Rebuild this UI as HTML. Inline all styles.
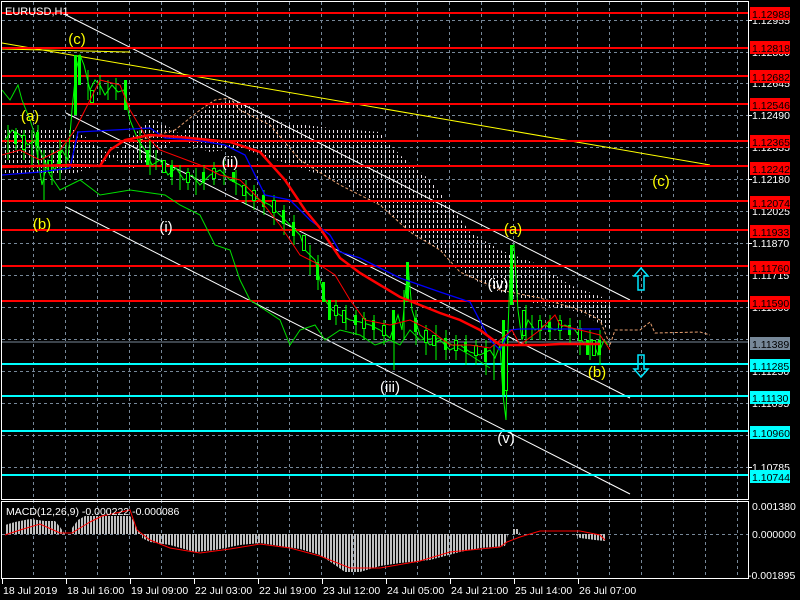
<!DOCTYPE html>
<html><head><meta charset="utf-8"><style>
html,body{margin:0;padding:0;background:#000;width:800px;height:600px;overflow:hidden}
svg{display:block}
text{font-family:"Liberation Sans",sans-serif}
</style></head><body>
<svg width="800" height="600" viewBox="0 0 800 600" xmlns="http://www.w3.org/2000/svg">
<defs>
<pattern id="cl" width="4" height="5" patternUnits="userSpaceOnUse">
<line x1="1.5" y1="0" x2="1.5" y2="3" stroke="#e8e0e8" stroke-width="1"/>
</pattern>
<pattern id="hs" width="3" height="10" patternUnits="userSpaceOnUse">
<rect x="0" y="0" width="2" height="10" fill="#c0c0c0"/>
</pattern>
</defs>
<!-- grid -->
<g stroke="#778899" stroke-width="1" stroke-dasharray="3,3">
<line x1="33.5" y1="2" x2="33.5" y2="578"/><line x1="65.5" y1="2" x2="65.5" y2="578"/><line x1="97.5" y1="2" x2="97.5" y2="578"/><line x1="129.5" y1="2" x2="129.5" y2="578"/><line x1="161.5" y1="2" x2="161.5" y2="578"/><line x1="193.5" y1="2" x2="193.5" y2="578"/><line x1="225.5" y1="2" x2="225.5" y2="578"/><line x1="257.5" y1="2" x2="257.5" y2="578"/><line x1="289.5" y1="2" x2="289.5" y2="578"/><line x1="321.5" y1="2" x2="321.5" y2="578"/><line x1="353.5" y1="2" x2="353.5" y2="578"/><line x1="385.5" y1="2" x2="385.5" y2="578"/><line x1="417.5" y1="2" x2="417.5" y2="578"/><line x1="449.5" y1="2" x2="449.5" y2="578"/><line x1="481.5" y1="2" x2="481.5" y2="578"/><line x1="513.5" y1="2" x2="513.5" y2="578"/><line x1="545.5" y1="2" x2="545.5" y2="578"/><line x1="577.5" y1="2" x2="577.5" y2="578"/><line x1="609.5" y1="2" x2="609.5" y2="578"/><line x1="641.5" y1="2" x2="641.5" y2="578"/><line x1="673.5" y1="2" x2="673.5" y2="578"/><line x1="705.5" y1="2" x2="705.5" y2="578"/><line x1="737.5" y1="2" x2="737.5" y2="578"/>
<line x1="2" y1="20.5" x2="748" y2="20.5"/><line x1="2" y1="52.5" x2="748" y2="52.5"/><line x1="2" y1="83.5" x2="748" y2="83.5"/><line x1="2" y1="115.5" x2="748" y2="115.5"/><line x1="2" y1="147.5" x2="748" y2="147.5"/><line x1="2" y1="179.5" x2="748" y2="179.5"/><line x1="2" y1="211.5" x2="748" y2="211.5"/><line x1="2" y1="243.5" x2="748" y2="243.5"/><line x1="2" y1="275.5" x2="748" y2="275.5"/><line x1="2" y1="307.5" x2="748" y2="307.5"/><line x1="2" y1="339.5" x2="748" y2="339.5"/><line x1="2" y1="371.5" x2="748" y2="371.5"/><line x1="2" y1="403.5" x2="748" y2="403.5"/><line x1="2" y1="435.5" x2="748" y2="435.5"/><line x1="2" y1="467.5" x2="748" y2="467.5"/>
<line x1="2" y1="534.5" x2="748" y2="534.5"/>
</g>
<!-- cloud -->
<polygon fill="url(#cl)" points="0,130 40,128 75,130 90,140 110,155 130,170 150,160 175,140 205,108 230,100 255,108 280,122 330,128 380,132 400,155 430,180 450,205 470,232 500,250 540,265 570,285 610,300 610,330 580,312 540,305 500,292 470,278 455,262 440,250 410,232 380,205 360,192 330,178 300,168 270,158 240,148 210,152 190,145 175,130 150,118 120,150 100,165 70,175 40,175 0,175"/>
<polyline fill="none" stroke="#e8a070" stroke-width="1" stroke-dasharray="3,2" points="140,140 175,130 200,110 215,100 230,98 240,110 270,125 300,160 340,185 380,205 410,232 440,250 460,272 500,290 540,298 580,310 600,320 610,345 615,330 640,330 650,322 655,333 700,332 710,335"/>
<!-- channel -->
<g stroke="#fff" stroke-width="1">
<line x1="66" y1="15" x2="630" y2="300"/><line x1="66" y1="113" x2="630" y2="398"/><line x1="66" y1="207" x2="630" y2="494"/>
</g>
<!-- yellow -->
<g stroke="#ffff00" stroke-width="1">
<line x1="2" y1="43" x2="710" y2="165"/><line x1="2" y1="49" x2="130" y2="52"/>
</g>
<!-- horizontal levels -->
<g stroke-width="2">
<line x1="2" y1="13" x2="748" y2="13" stroke="#ff0000"/>
<line x1="2" y1="48" x2="748" y2="48" stroke="#ff0000"/>
<line x1="2" y1="76" x2="748" y2="76" stroke="#ff0000"/>
<line x1="2" y1="104" x2="748" y2="104" stroke="#ff0000"/>
<line x1="2" y1="141" x2="748" y2="141" stroke="#ff0000"/>
<line x1="2" y1="166" x2="748" y2="166" stroke="#ff0000"/>
<line x1="2" y1="201" x2="748" y2="201" stroke="#ff0000"/>
<line x1="2" y1="230" x2="748" y2="230" stroke="#ff0000"/>
<line x1="2" y1="266" x2="748" y2="266" stroke="#ff0000"/>
<line x1="2" y1="301" x2="748" y2="301" stroke="#ff0000"/>
<line x1="2" y1="364" x2="748" y2="364" stroke="#00ffff"/>
<line x1="2" y1="396" x2="748" y2="396" stroke="#00ffff"/>
<line x1="2" y1="431" x2="748" y2="431" stroke="#00ffff"/>
<line x1="2" y1="475" x2="748" y2="475" stroke="#00ffff"/>
</g>
<line x1="2" y1="342" x2="748" y2="342" stroke="#778899" stroke-width="1"/>
<!-- chikou green -->
<polyline fill="none" stroke="#00e000" stroke-width="1" points="2,90 10,100 18,85 22,100 30,120 40,150 50,175 60,190 80,180 100,195 130,190 165,195 180,205 200,215 215,245 230,250 240,280 250,300 265,310 280,320 290,345 300,330 315,325 325,340 340,330 360,335 375,345 390,340 400,345 410,330 420,340 440,338 470,355 490,368"/>
<!-- candles (approx) -->
<g stroke="#00ff00" stroke-width="1" fill="none">
<polyline points="5,140 12,130 20,135 28,145 35,140 42,185 48,160 55,170 62,150 68,160 72,110 76,70 80,55 84,65 90,90 95,80 100,85 105,95 112,85 118,92 124,90 130,120 138,140 145,150 152,165 160,160 168,175 176,168 184,180 192,175 200,185 210,175 220,170 230,180 240,185 250,195 260,200 270,205 280,215 290,225 300,235 305,250 315,260 320,280 325,300 332,310 340,315 350,320 360,322 370,325 380,330 390,338 398,315 402,330 408,265 412,310 420,335 430,345 440,340 450,350 460,345 470,352 480,355 490,350 495,358 500,345 503,395 506,420 508,330 511,250 514,245 518,310 522,340 528,320 535,330 545,325 555,330 565,325 575,330 585,345 592,340 598,355 604,340 608,345"/>
<path d="M8,125V160M16,128V150M24,130V160M32,130V170M38,125V160M44,150V200M52,150V185M60,140V180M66,140V170M88,70V100M100,75V95M108,80V100M116,78V100M140,130V160M150,140V175M156,150V170M172,160V185M180,165V190M188,168V190M196,168V195M204,165V190M214,162V185M224,160V185M236,170V195M246,180V205M254,185V210M264,190V215M274,195V225M284,205V235M294,215V245M310,245V275M318,255V290M336,300V325M346,305V330M356,310V335M364,312V340M374,315V340M384,320V345M394,320V370M404,290V340M416,310V345M426,325V355M436,325V360M446,330V360M456,335V360M466,335V365M476,340V365M486,340V375M494,340V380M526,305V345M532,315V340M540,315V340M550,315V340M560,315V340M570,318V345M580,320V355M590,330V360M600,330V365"/>
</g>
<g fill="#00ff00">
<rect x="74" y="55" width="3" height="60"/><rect x="78" y="55" width="3" height="30"/><rect x="124" y="80" width="3" height="30"/><rect x="146" y="150" width="3" height="15"/><rect x="232" y="172" width="3" height="10"/><rect x="322" y="282" width="3" height="20"/><rect x="328" y="300" width="3" height="20"/><rect x="392" y="310" width="3" height="30"/><rect x="406" y="262" width="3" height="40"/><rect x="502" y="320" width="3" height="75"/><rect x="510" y="245" width="3" height="60"/><rect x="586" y="340" width="3" height="15"/>
<rect x="14" y="132" width="3" height="12"/><rect x="36" y="132" width="3" height="14"/><rect x="58" y="150" width="3" height="14"/><rect x="170" y="165" width="3" height="12"/><rect x="202" y="172" width="3" height="10"/><rect x="262" y="195" width="3" height="12"/><rect x="282" y="210" width="3" height="14"/><rect x="292" y="222" width="3" height="14"/><rect x="316" y="262" width="3" height="18"/><rect x="354" y="315" width="3" height="10"/><rect x="372" y="320" width="3" height="10"/><rect x="414" y="318" width="3" height="14"/><rect x="444" y="338" width="3" height="12"/><rect x="464" y="342" width="3" height="10"/><rect x="484" y="348" width="3" height="14"/><rect x="548" y="322" width="3" height="10"/><rect x="568" y="325" width="3" height="10"/><rect x="598" y="340" width="3" height="15"/>
</g>
<g fill="#000" stroke="#00ff00" stroke-width="1">
<rect x="90.5" y="90.5" width="3" height="12"/><rect x="162.5" y="160.5" width="3" height="12"/><rect x="242.5" y="185.5" width="3" height="10"/><rect x="302.5" y="235.5" width="3" height="15"/><rect x="342.5" y="310.5" width="3" height="12"/><rect x="432.5" y="335.5" width="3" height="10"/><rect x="504.5" y="330.5" width="3" height="60"/><rect x="522.5" y="310.5" width="3" height="25"/><rect x="592.5" y="340.5" width="3" height="15"/>
<rect x="22.5" y="135.5" width="3" height="14"/><rect x="48.5" y="160.5" width="3" height="12"/><rect x="186.5" y="172.5" width="3" height="10"/><rect x="212.5" y="168.5" width="3" height="10"/><rect x="252.5" y="190.5" width="3" height="10"/><rect x="272.5" y="200.5" width="3" height="12"/><rect x="334.5" y="305.5" width="3" height="10"/><rect x="362.5" y="318.5" width="3" height="10"/><rect x="382.5" y="325.5" width="3" height="10"/><rect x="424.5" y="330.5" width="3" height="12"/><rect x="454.5" y="340.5" width="3" height="10"/><rect x="474.5" y="345.5" width="3" height="10"/><rect x="538.5" y="320.5" width="3" height="10"/><rect x="558.5" y="320.5" width="3" height="10"/><rect x="578.5" y="328.5" width="3" height="12"/>
</g>
<!-- blue -->
<polyline fill="none" stroke="#0000ff" stroke-width="1.3" points="2,175 40,172 70,168 78,132 150,128 165,138 195,140 225,145 245,155 265,195 290,200 310,220 330,235 340,252 360,258 380,268 400,278 420,285 440,292 470,302 490,340 500,350 510,330 520,329 600,329"/>
<!-- thin red -->
<polyline fill="none" stroke="#ff0000" stroke-width="1" points="2,155 20,150 40,160 60,150 75,130 85,110 100,80 120,85 130,110 145,135 160,150 200,165 220,175 240,180 260,200 280,225 300,255 320,265 335,275 350,300 365,320 390,325 410,320 430,330 450,345 470,345 490,348 500,340 512,330 520,345 540,330 555,315 560,325 580,330 600,335 610,350"/>
<!-- thick red -->
<polyline fill="none" stroke="#ff0000" stroke-width="2.5" points="2,167 70,165 100,166 110,150 125,140 150,135 180,137 230,142 260,152 285,180 305,210 320,228 340,258 360,273 380,285 400,297 420,305 440,313 460,320 480,330 500,345 520,345 540,345 560,344 600,344"/>
<!-- wave labels -->
<g font-size="15" text-anchor="middle">
<text x="77" y="44" fill="#ffff00">(c)</text>
<text x="30" y="121" fill="#ffff00">(a)</text>
<text x="42" y="229" fill="#ffff00">(b)</text>
<text x="513" y="234" fill="#ffff00">(a)</text>
<text x="597" y="377" fill="#ffff00">(b)</text>
<text x="661" y="186" fill="#ffff00">(c)</text>
<text x="166" y="232" fill="#fff">(i)</text>
<text x="230" y="167" fill="#fff">(ii)</text>
<text x="390" y="392" fill="#fff">(iii)</text>
<text x="498" y="289" fill="#fff">(iv)</text>
<text x="506" y="443" fill="#fff">(v)</text>
</g>
<!-- arrows -->
<path d="M641,268 L648,276 L644,276 L644,290 L638,290 L638,276 L634,276 Z" fill="none" stroke="#00e8ff" stroke-width="1.5"/>
<path d="M641,377 L648,369 L644,369 L644,355 L638,355 L638,369 L634,369 Z" fill="none" stroke="#00e8ff" stroke-width="1.5"/>
<!-- MACD -->
<polygon fill="url(#hs)" points="5,534 5,525 15,522 30,519 45,521 55,521 60,527 65,534 72,534 72,528 78,520 85,516 130,516 133,520 138,530 142,534 142,538 150,542 170,545 195,552 215,550 240,545 260,543 280,546 300,549 320,555 335,565 345,572 360,572 380,566 400,563 430,560 460,552 480,548 505,546 508,534"/>
<polygon fill="url(#hs)" points="512,534 512,529 518,529 520,534"/>
<polygon fill="url(#hs)" points="575,534 600,534 605,534 605,541 595,540 580,538"/>
<polyline fill="none" stroke="#ff0000" stroke-width="1" points="5,535 20,530 40,524 60,533 72,533 80,528 90,522 102,516 130,510 137,530 150,540 170,548 200,553 230,549 260,544 290,548 320,556 350,568 380,568 420,561 450,552 500,547 507,542 520,537 540,531 580,531 600,535 605,540"/>
<text x="6" y="515" fill="#fff" font-size="10.5">MACD(12,26,9) -0.000222 -0.000086</text>
<!-- frames -->
<rect x="1.5" y="1.5" width="747" height="498" fill="none" stroke="#fff" stroke-width="1"/>
<rect x="1.5" y="501.5" width="747" height="77" fill="none" stroke="#fff" stroke-width="1"/>
<text x="5" y="15" fill="#fff" font-size="11">EURUSD,H1</text>
<!-- price axis labels -->
<g font-size="10.5" fill="#fff">
<text x="752" y="24">1.12955</text><text x="752" y="56">1.12800</text><text x="752" y="87">1.12645</text><text x="752" y="119">1.12490</text><text x="752" y="151">1.12335</text><text x="752" y="183">1.12180</text><text x="752" y="215">1.12025</text><text x="752" y="247">1.11870</text><text x="752" y="279">1.11715</text><text x="752" y="311">1.11560</text><text x="752" y="375">1.11250</text><text x="752" y="407">1.11095</text><text x="752" y="471">1.10785</text>
<text x="752" y="510">0.001380</text><text x="752" y="538">0.000000</text><text x="748" y="579">-0.001895</text>
</g>
<g stroke="#fff"><line x1="748" y1="20.5" x2="752" y2="20.5"/><line x1="748" y1="115.5" x2="752" y2="115.5"/><line x1="748" y1="179.5" x2="752" y2="179.5"/><line x1="748" y1="243.5" x2="752" y2="243.5"/><line x1="748" y1="467.5" x2="752" y2="467.5"/></g>
<g font-size="10.5">
<rect x="750" y="7" width="40" height="13" fill="#ff0000"/><text x="752" y="18" fill="#000">1.12988</text>
<rect x="750" y="41" width="40" height="13" fill="#ff0000"/><text x="752" y="52" fill="#000">1.12818</text>
<rect x="750" y="70" width="40" height="13" fill="#ff0000"/><text x="752" y="81" fill="#000">1.12682</text>
<rect x="750" y="98" width="40" height="13" fill="#ff0000"/><text x="752" y="109" fill="#000">1.12546</text>
<rect x="750" y="135" width="40" height="13" fill="#ff0000"/><text x="752" y="146" fill="#000">1.12365</text>
<rect x="750" y="162" width="40" height="13" fill="#ff0000"/><text x="752" y="173" fill="#000">1.12242</text>
<rect x="750" y="196" width="40" height="13" fill="#ff0000"/><text x="752" y="207" fill="#000">1.12074</text>
<rect x="750" y="225" width="40" height="13" fill="#ff0000"/><text x="752" y="236" fill="#000">1.11933</text>
<rect x="750" y="261" width="40" height="13" fill="#ff0000"/><text x="752" y="272" fill="#000">1.11760</text>
<rect x="750" y="296" width="40" height="13" fill="#ff0000"/><text x="752" y="307" fill="#000">1.11590</text>
<rect x="750" y="337" width="40" height="13" fill="#778899"/><text x="752" y="348" fill="#000">1.11389</text>
<rect x="750" y="359" width="40" height="13" fill="#00ffff"/><text x="752" y="370" fill="#000">1.11285</text>
<rect x="750" y="391" width="40" height="13" fill="#00ffff"/><text x="752" y="402" fill="#000">1.11130</text>
<rect x="750" y="426" width="40" height="13" fill="#00ffff"/><text x="752" y="437" fill="#000">1.10960</text>
<rect x="750" y="470" width="40" height="13" fill="#00ffff"/><text x="752" y="481" fill="#000">1.10744</text>
</g>
<!-- time axis -->
<g stroke="#fff"><line x1="2.5" y1="579" x2="2.5" y2="584"/><line x1="66.5" y1="579" x2="66.5" y2="584"/><line x1="130.5" y1="579" x2="130.5" y2="584"/><line x1="194.5" y1="579" x2="194.5" y2="584"/><line x1="258.5" y1="579" x2="258.5" y2="584"/><line x1="322.5" y1="579" x2="322.5" y2="584"/><line x1="386.5" y1="579" x2="386.5" y2="584"/><line x1="450.5" y1="579" x2="450.5" y2="584"/><line x1="514.5" y1="579" x2="514.5" y2="584"/><line x1="578.5" y1="579" x2="578.5" y2="584"/></g>
<g font-size="10.5" fill="#fff">
<text x="3" y="594">18 Jul 2019</text><text x="67" y="594">18 Jul 16:00</text><text x="131" y="594">19 Jul 09:00</text><text x="195" y="594">22 Jul 03:00</text><text x="259" y="594">22 Jul 19:00</text><text x="323" y="594">23 Jul 12:00</text><text x="387" y="594">24 Jul 05:00</text><text x="451" y="594">24 Jul 21:00</text><text x="515" y="594">25 Jul 14:00</text><text x="579" y="594">26 Jul 07:00</text>
</g>
</svg>
</body></html>
